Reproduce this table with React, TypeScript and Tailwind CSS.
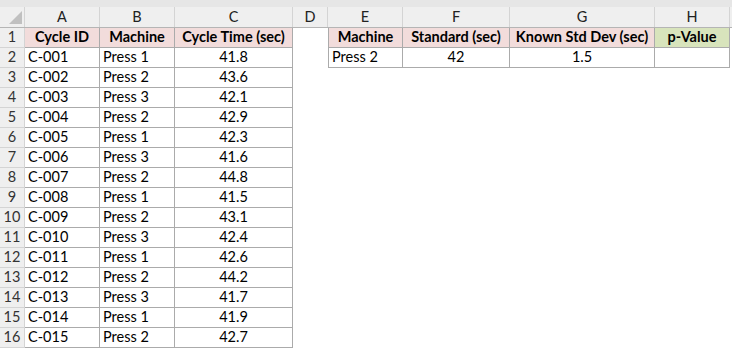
const cols = ["A", "B", "C", "D", "E", "F", "G", "H"];
const widths = ["w-[75px]", "w-[75px]", "w-[118px]", "w-[35px]", "w-[75px]", "w-[107px]", "w-[145px]", "w-[75px]"];

const rows: [string, string, string][] = [
  ["C-001", "Press 1", "41.8"],
  ["C-002", "Press 2", "43.6"],
  ["C-003", "Press 3", "42.1"],
  ["C-004", "Press 2", "42.9"],
  ["C-005", "Press 1", "42.3"],
  ["C-006", "Press 3", "41.6"],
  ["C-007", "Press 2", "44.8"],
  ["C-008", "Press 1", "41.5"],
  ["C-009", "Press 2", "43.1"],
  ["C-010", "Press 3", "42.4"],
  ["C-011", "Press 1", "42.6"],
  ["C-012", "Press 2", "44.2"],
  ["C-013", "Press 3", "41.7"],
  ["C-014", "Press 1", "41.9"],
  ["C-015", "Press 2", "42.7"],
];

const cell = "h-5 box-border shrink-0 flex items-center border-b border-r border-[#ababab] text-black";
const head = "bg-[#f2dcdb] font-bold justify-center";

function RowNum({ n }: { n: number }) {
  return (
    <div className="w-[25px] h-5 shrink-0 box-border flex items-center justify-center bg-[#efefef] border-r border-b border-[#d4d4d4] text-[#333]">
      {n}
    </div>
  );
}

export default function App() {
  return (
    <div
      className="w-[732px] h-[348px] overflow-hidden bg-white text-[14.5px] leading-none"
      style={{ fontFamily: "Lato, 'Liberation Sans', sans-serif" }}
    >
      <div className="h-[7px] bg-[#e6e6e6]" />
      <div className="flex h-[21px] bg-[#efefef] border-b border-[#b5b5b5] box-border">
        <div className="w-[25px] shrink-0 relative border-r border-[#d4d4d4]">
          <svg className="absolute left-[9px] top-[4px]" width="13" height="13" viewBox="0 0 13 13">
            <polygon points="13,0 13,13 0,13" fill="#c0c0c0" />
          </svg>
        </div>
        {cols.map((c, i) => (
          <div
            key={c}
            className={`${widths[i]} shrink-0 box-border flex items-center justify-center border-r border-[#d4d4d4] text-[#222]`}
          >
            {c}
          </div>
        ))}
        <div className="flex-1" />
      </div>

      <div className="flex">
        <RowNum n={1} />
        <div className={`${cell} ${head} w-[75px]`}>Cycle ID</div>
        <div className={`${cell} ${head} w-[75px]`}>Machine</div>
        <div className={`${cell} ${head} w-[118px]`}>Cycle Time (sec)</div>
        <div className="w-[35px] h-5 shrink-0" />
        <div className={`${cell} ${head} w-[75px] border-l`}>Machine</div>
        <div className={`${cell} ${head} w-[107px]`}>Standard (sec)</div>
        <div className={`${cell} ${head} w-[145px]`}>Known Std Dev (sec)</div>
        <div className={`${cell} w-[75px] bg-[#d8e4bc] font-bold justify-center`}>p-Value</div>
      </div>

      {rows.map(([id, m, t], i) => (
        <div key={id} className="flex">
          <RowNum n={i + 2} />
          <div className={`${cell} w-[75px] pl-[3px]`}>{id}</div>
          <div className={`${cell} w-[75px] pl-[3px]`}>{m}</div>
          <div className={`${cell} w-[118px] justify-center`}>{t}</div>
          {i === 0 && (
            <>
              <div className="w-[35px] h-5 shrink-0" />
              <div className={`${cell} w-[75px] border-l pl-[3px]`}>Press 2</div>
              <div className={`${cell} w-[107px] justify-center`}>42</div>
              <div className={`${cell} w-[145px] justify-center`}>1.5</div>
              <div className={`${cell} w-[75px]`} />
            </>
          )}
        </div>
      ))}
    </div>
  );
}
